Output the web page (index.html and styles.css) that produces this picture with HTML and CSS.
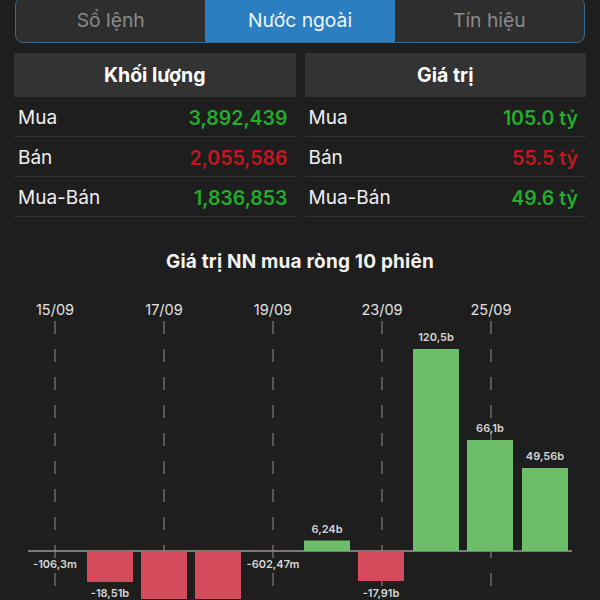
FILE: index.html
```html
<!DOCTYPE html>
<html lang="vi">
<head>
<meta charset="utf-8">
<link rel="stylesheet" href="styles.css">
</head>
<body>
<div class="page">
  <div class="seg">
    <div class="seg-item">Sổ lệnh</div>
    <div class="seg-item active">Nước ngoài</div>
    <div class="seg-item">Tín hiệu</div>
  </div>
  <div class="stats">
    <div class="col">
      <div class="col-head">Khối lượng</div>
      <div class="row"><span class="lbl">Mua</span><span class="val up">3,892,439</span></div>
      <div class="row"><span class="lbl">Bán</span><span class="val down">2,055,586</span></div>
      <div class="row"><span class="lbl">Mua-Bán</span><span class="val up">1,836,853</span></div>
    </div>
    <div class="col">
      <div class="col-head">Giá trị</div>
      <div class="row"><span class="lbl">Mua</span><span class="val up">105.0 tỷ</span></div>
      <div class="row"><span class="lbl">Bán</span><span class="val down">55.5 tỷ</span></div>
      <div class="row"><span class="lbl">Mua-Bán</span><span class="val up">49.6 tỷ</span></div>
    </div>
  </div>
  <h2 class="chart-title">Giá trị NN mua ròng 10 phiên</h2>
</div>
<svg class="chart" width="600" height="326" viewBox="0 1 600 326">
  <g class="dates">
    <text x="55" y="43">15/09</text>
    <text x="164" y="43">17/09</text>
    <text x="273" y="43">19/09</text>
    <text x="382" y="43">23/09</text>
    <text x="491" y="43">25/09</text>
  </g>
  <g class="grid">
    <line x1="55" y1="49" x2="55" y2="330"/>
    <line x1="164" y1="49" x2="164" y2="330"/>
    <line x1="273" y1="49" x2="273" y2="330"/>
    <line x1="382" y1="49" x2="382" y2="330"/>
    <line x1="491" y1="49" x2="491" y2="330"/>
  </g>
  <line class="zero" x1="28" y1="279" x2="572" y2="279"/>
  <g class="bars">
    <rect class="neg" x="87" y="279" width="46" height="31"/>
    <rect class="neg" x="141" y="279" width="46" height="60"/>
    <rect class="neg" x="195" y="279" width="46" height="60"/>
    <rect class="neg" x="250" y="279" width="46" height="1"/>
    <rect class="pos" x="304" y="268.5" width="46" height="10.5"/>
    <rect class="neg" x="358" y="279" width="46" height="30"/>
    <rect class="pos" x="413" y="77" width="46" height="202"/>
    <rect class="pos" x="467" y="168" width="46" height="111"/>
    <rect class="pos" x="522" y="196" width="46" height="83"/>
  </g>
  <g class="vals">
    <text x="55" y="296">-106,3m</text>
    <text x="110" y="325">-18,51b</text>
    <text x="273" y="296">-602,47m</text>
    <text x="327" y="260.5">6,24b</text>
    <text x="381" y="325">-17,91b</text>
    <text x="436" y="69">120,5b</text>
    <text x="490" y="160">66,1b</text>
    <text x="545" y="188">49,56b</text>
  </g>
</svg>
</body>
</html>
```
FILE: styles.css
```css
html, body {
  margin: 0;
  padding: 0;
}
body {
  width: 600px;
  height: 600px;
  overflow: hidden;
  background: #1e1e1e;
  font-family: Inter, "Noto Sans", "Liberation Sans", sans-serif;
  color: #f2f2f2;
}
.page {
  padding: 0 14px;
}
.seg {
  display: flex;
  margin: -3px 1px 0;
  height: 44px;
  border: 1px solid #3b6a8e;
  border-radius: 8px;
  background: #2e2e2e;
  overflow: hidden;
}
.seg-item {
  flex: 1;
  display: flex;
  align-items: center;
  justify-content: center;
  font-size: 19.3px;
  color: #8a8a8a;
}
.seg-item.active {
  background: #2b7ec0;
  color: #eef5fb;
}
.stats {
  display: grid;
  grid-template-columns: 1fr 1fr;
  column-gap: 9px;
  margin-top: 10px;
}
.col-head {
  height: 44px;
  background: #333333;
  display: flex;
  align-items: center;
  justify-content: center;
  font-size: 19.5px;
  font-weight: 700;
  color: #ffffff;
}
.row {
  box-sizing: border-box;
  height: 40px;
  padding: 2px 8px 0 4px;
  border-bottom: 1px solid #333333;
  display: flex;
  align-items: center;
  justify-content: space-between;
  font-size: 19px;
}
.lbl {
  color: #f0f0f0;
}
.val {
  font-size: 19.5px;
  font-weight: 600;
}
.up {
  color: #22ad2a;
}
.down {
  color: #c3161f;
}
.chart-title {
  margin: 34px 0 0;
  height: 22px;
  line-height: 22px;
  text-align: center;
  font-size: 19px;
  font-weight: 700;
  letter-spacing: 0.2px;
  color: #f2f2f2;
}
.chart {
  display: block;
}
.dates text {
  font-size: 14.5px;
  fill: #e2e2e2;
  text-anchor: middle;
}
.grid line {
  stroke: #7e7e7e;
  stroke-width: 1.2;
  stroke-dasharray: 13 15;
}
.zero {
  stroke: #9a9a9a;
  stroke-width: 1.5;
}
.pos {
  fill: #6cbf68;
}
.neg {
  fill: #d64b5b;
}
.vals text {
  font-size: 11px;
  font-weight: 600;
  fill: #d6d6d6;
  text-anchor: middle;
}
```
